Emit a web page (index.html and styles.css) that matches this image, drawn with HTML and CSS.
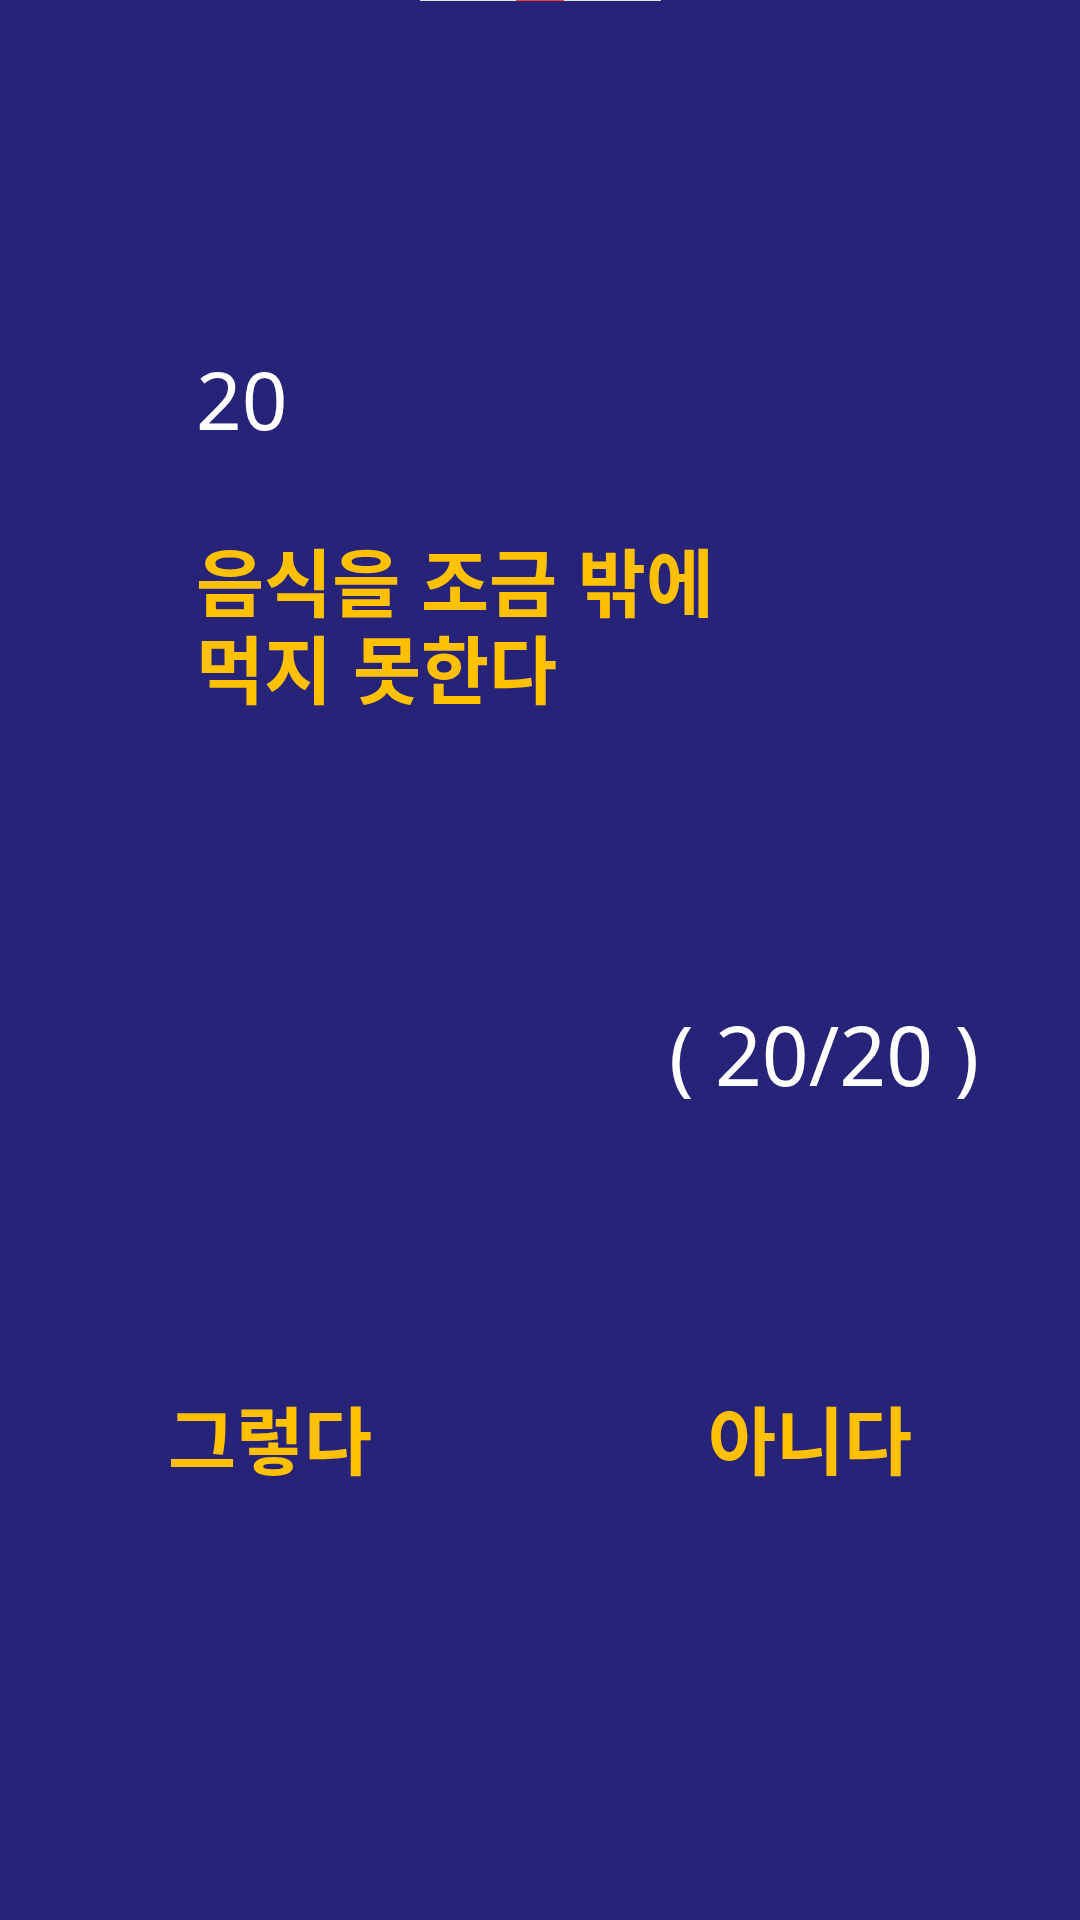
FILE: index.html
```html
<!DOCTYPE html>
<html lang="ko">
<head>
<meta charset="utf-8">
<title>Quiz</title>
<link rel="stylesheet" href="styles.css">
</head>
<body>
<div class="screen">
  <div class="progress">
    <span class="seg seg-done"></span>
    <span class="seg seg-current"></span>
    <span class="seg seg-rest"></span>
  </div>
  <div class="question">
    <div class="q-number">20</div>
    <div class="q-text">
      <div class="q-line">음식을 조금 밖에</div>
      <div class="q-line">먹지 못한다</div>
    </div>
  </div>
  <div class="counter">( 20/20 )</div>
  <div class="answers">
    <button class="answer">그렇다</button>
    <button class="answer">아니다</button>
  </div>
</div>
</body>
</html>
```
FILE: styles.css
```css
html, body {
  margin: 0;
  padding: 0;
  background: #262379;
}
.screen {
  width: 1080px;
  height: 1920px;
  display: flex;
  flex-direction: column;
  font-family: "Noto Sans", "Noto Sans CJK KR", sans-serif;
}
.progress {
  display: flex;
  justify-content: center;
  height: 1px;
}
.seg { display: block; height: 1px; }
.seg-done { width: 96px; background: #e4e4e4; }
.seg-current { width: 48px; background: #f04040; }
.seg-rest { width: 97px; background: #e4e4e4; }
.question {
  padding-left: 196px;
  margin-top: 358px;
}
.q-number {
  color: #ffffff;
  font-size: 80px;
  line-height: 80px;
}
.q-text {
  margin-top: 96px;
  color: #ffc000;
  font-family: "Noto Sans CJK KR", sans-serif;
  font-weight: 700;
  font-size: 74px;
}
.q-line {
  height: 87px;
  line-height: 87px;
}
.counter {
  margin-top: 304px;
  align-self: flex-end;
  padding-right: 101px;
  color: #ffffff;
  font-size: 82px;
  line-height: 82px;
}
.answers {
  margin-top: 302px;
  display: flex;
}
.answer {
  flex: 1;
  background: none;
  border: 0;
  padding: 0;
  color: #ffc000;
  font-family: "Noto Sans CJK KR", sans-serif;
  font-weight: 700;
  font-size: 74px;
  line-height: 80px;
  text-align: center;
}
```
